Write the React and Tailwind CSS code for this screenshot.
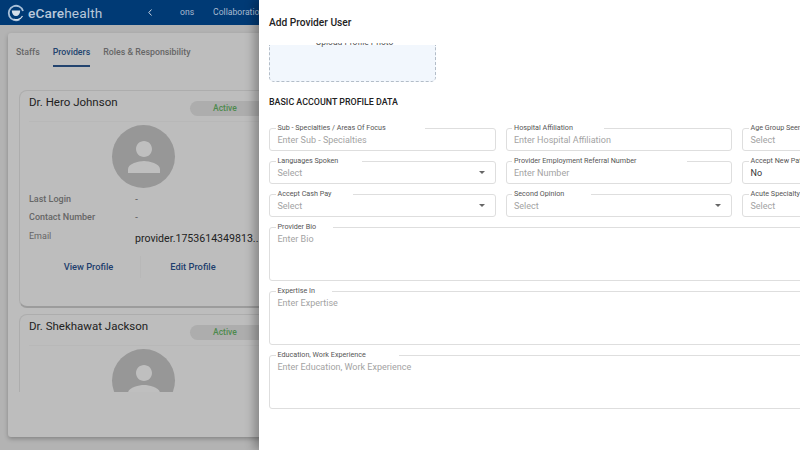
const rows = [
  { label: 'Sub - Specialties / Areas Of Focus', notch: 'w-[149px]', value: 'Enter Sub - Specialties' },
  { label: 'Hospital Affiliation', notch: 'w-[92px]', value: 'Enter Hospital Affiliation' },
  { label: 'Age Group Seen', notch: 'w-[90px]', value: 'Select' },
  { label: 'Languages Spoken', notch: 'w-[86px]', value: 'Select', caret: true },
  { label: 'Provider Employment Referral Number', notch: 'w-[175px]', value: 'Enter Number' },
  { label: 'Accept New Patients', notch: 'w-[90px]', value: 'No', filled: true },
  { label: 'Accept Cash Pay', notch: 'w-[77px]', value: 'Select', caret: true },
  { label: 'Second Opinion', notch: 'w-[79px]', value: 'Select', caret: true },
  { label: 'Acute Specialty', notch: 'w-[90px]', value: 'Select' },
]

const areas = [
  { label: 'Provider Bio', notch: 'w-[57px]', value: 'Enter Bio' },
  { label: 'Expertise In', notch: 'w-[56px]', value: 'Enter Expertise' },
  { label: 'Education, Work Experience', notch: 'w-[123px]', value: 'Enter Education, Work Experience' },
]

function Field({ label, notch, value, caret, filled, className }) {
  return (
    <fieldset className={`relative border border-[#dedede] rounded-[3px] px-[7.5px] min-w-0 ${className}`}>
      <legend className={`${notch} ml-[-2px] pl-[2px] h-[9px] leading-[7px] text-[7.2px] text-[#555] whitespace-nowrap`}>
        {label}
      </legend>
      <div className={`text-[9px] leading-[12px] mt-[1px] ${filled ? 'text-[#333]' : 'text-[#a3a3a3]'}`}>{value}</div>
      {caret && (
        <svg className="absolute right-[10px] top-[5px] w-[6px] h-[3px]" viewBox="0 0 6 3">
          <path d="M0 0h6L3 3z" fill="#666" />
        </svg>
      )}
    </fieldset>
  )
}

function ProviderCard({ name, cut }) {
  return (
    <div className={`shrink-0 w-[300px] bg-[#bdbdbd] border border-[#adadad] rounded-[8px] px-[9px] ${cut ? 'h-[90px] border-b-0 rounded-b-none' : 'h-[218px] border-b-2 border-b-[#9c9c9c]'}`}>
      <div className="flex items-start h-[31px] border-b border-[#b8b8b8]">
        <div className="text-[11.5px] leading-[14px] mt-[4px] text-[#222]">{name}</div>
        <div className="mt-[10px] ml-auto w-[119px] h-[15px] rounded-full bg-[#adadad] text-[8.5px] leading-[15px] pl-[23px] font-medium text-[#4d8a4d]">Active</div>
      </div>
      <div className="ml-[83px] mt-[3px] w-[63px] h-[63px] rounded-full bg-[#979797] flex items-center justify-center">
        <svg className="w-[48px] h-[48px]" viewBox="0 0 24 24">
          <path
            fill="#bfbfbf"
            d="M12 12c2.210 0 4-1.790 4-4s-1.790-4-4-4-4 1.790-4 4 1.790 4 4 4zm0 2c-2.670 0-8 1.340-8 4v2h16v-2c0-2.660-5.330-4-8-4z"
          />
        </svg>
      </div>
      {!cut && (
        <div>
          <div className="flex mt-[3px] h-[18px] items-center text-[9px] font-medium text-[#666]">
            <div className="w-[106px]">Last Login</div>
            <div>-</div>
          </div>
          <div className="flex h-[18px] items-center text-[9px] font-medium text-[#666]">
            <div className="w-[106px]">Contact Number</div>
            <div>-</div>
          </div>
          <div className="flex h-[22px] items-start text-[9px] text-[#666]">
            <div className="w-[106px] mt-[3px]">Email</div>
            <div className="text-[10.6px] mt-[4px] text-[#222] whitespace-nowrap">provider.1753614349813...</div>
          </div>
          <div className="flex mt-[7px] h-[22px] items-center text-[9.3px] font-medium text-[#1f3f6e]">
            <div className="w-[112px] text-center pl-[8px] border-r border-[#b8b8b8] h-full leading-[22px]">View Profile</div>
            <div className="w-[104px] text-center leading-[22px]">Edit Profile</div>
          </div>
        </div>
      )}
    </div>
  )
}

export default function App() {
  return (
    <div className="relative w-[800px] h-[450px] overflow-hidden bg-[#b3b3b3] font-['Roboto',sans-serif]">
      <div className="h-[25px] bg-[#003a75] flex items-center text-[#a9bbd0]">
        <div className="w-[148px] flex items-center pl-[7px] gap-[3px]">
          <svg className="w-[18px] h-[18px]" viewBox="0 0 18 18">
            <path d="M12.500 15.500A7.300 7.300 0 1 1 16 7" fill="none" stroke="#a9c0d8" strokeWidth="1.800" />
            <path d="M4.800 6.500h8.400c0 3.500-1.800 5.500-4.200 5.500s-4.200-2-4.200-5.500z" fill="#d5dfea" />
            <path d="M6.500 15c3 1.500 7 .5 9-3" fill="none" stroke="#d5dfea" strokeWidth="1.200" />
          </svg>
          <span className="text-[13.7px] leading-[16px] text-[#b9c8da] tracking-[0.1px]">
            <span className="font-medium">eCare</span>health
          </span>
        </div>
        <svg className="w-[4px] h-[7px]" viewBox="0 0 4 7">
          <path d="M3.500 0.500 0.800 3.500 3.500 6.500" fill="none" stroke="#c5d2e0" strokeWidth="1" />
        </svg>
        <span className="ml-[28px] text-[8.6px]">ons</span>
        <span className="ml-[19px] text-[8.6px] whitespace-nowrap">Collaboration</span>
      </div>
      <div className="mt-[8px] ml-[8px] w-[300px] h-[404px] bg-[#bdbdbd] rounded-[3px] shadow-[0_2px_4px_rgba(0,0,0,0.25)] overflow-hidden">
        <div className="flex h-[34px] pl-[8px] pt-[13px] gap-[13px] text-[8.8px] font-medium text-[#666]">
          <span>Staffs</span>
          <span className="h-[21px] border-b-2 border-[#23446f] text-[#23446f]">Providers</span>
          <span>Roles &amp; Responsibility</span>
        </div>
        <div className="flex flex-col gap-[6px] mt-[23px] ml-[11px] h-[302px] overflow-hidden">
          <ProviderCard name="Dr. Hero Johnson" />
          <ProviderCard name="Dr. Shekhawat Jackson" cut />
        </div>
      </div>

      <div className="absolute left-[259px] top-0 w-[541px] h-[450px] bg-white shadow-[-5px_0_9px_rgba(0,0,0,0.28)] overflow-hidden pl-[10px]">
        <div className="h-[43px] pt-[16px] text-[10.2px] leading-[13px] font-medium text-[#222]">Add Provider User</div>
        <div className="h-[39px] w-[167px] overflow-hidden">
          <div className="mt-[-6px] h-[8px] text-center pl-[4px] text-[8.500px] leading-[10px] text-[#555] whitespace-nowrap">Upload Profile Photo</div>
          <div className="h-[37px] bg-[#f2f7fd] border border-dashed border-t-0 border-[#b3bdc8] rounded-b-[5px]"></div>
        </div>
        <div className="mt-[14px] text-[8.9px] leading-[12px] font-medium text-[#222] whitespace-nowrap">BASIC ACCOUNT PROFILE DATA</div>
        <div className="mt-[16px] grid grid-cols-[226.5px_226.5px_226.5px] gap-x-[10px] gap-y-[6px] w-[701px]">
          {rows.map((row) => (
            <Field key={row.label} {...row} className="h-[27px]" />
          ))}
        </div>
        <div className="mt-[6px] w-[701px] flex flex-col gap-[6px]">
          {areas.map((a) => (
            <Field key={a.label} label={a.label} notch={a.notch} value={a.value} className="h-[58px]" />
          ))}
        </div>
      </div>
    </div>
  )
}
